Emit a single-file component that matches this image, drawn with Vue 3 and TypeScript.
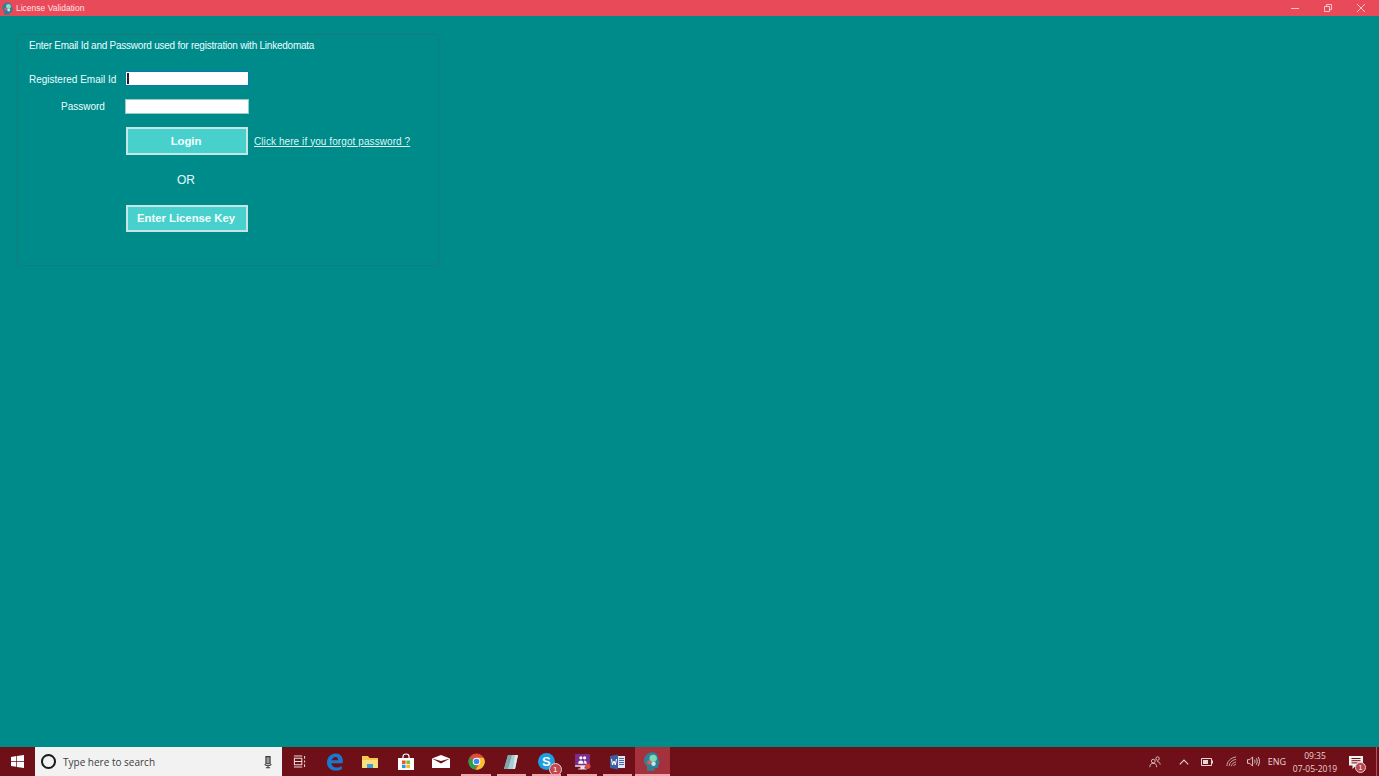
<script setup lang="ts">
const runningApps = ['chrome', 'notes', 'skype', 'teams', 'word', 'app'];
</script>

<template>
  <div class="window">
    <header class="titlebar">
      <div class="title-left">
        <svg class="app-icon small" viewBox="0 0 16 16">
          <path d="M8 1C4.200 1 1.600 3.800 1.600 7.200c0 2 .9 3.400 2.200 4.500V15h5.600v-1.800h1.500c.9 0 1.500-.7 1.500-1.500V9.800l1.400-.5-1.200-2.600C12.400 3.300 10.500 1 8 1z" fill="#2f7f96" />
          <circle cx="8.500" cy="5.600" r="2.800" fill="#8fdcc4" />
          <circle cx="5.500" cy="8.600" r="1.600" fill="#e25b5b" />
          <circle cx="8.800" cy="9.800" r="1.700" fill="#c5e6f2" />
        </svg>
        <span class="title-text">License Validation</span>
      </div>
      <div class="win-controls">
        <svg viewBox="0 0 10 10" class="win-btn"><path d="M1 5.500h8" /></svg>
        <svg viewBox="0 0 10 10" class="win-btn"><path d="M1.500 3.500h5v5h-5zM3.500 3.500v-2h5v5h-2" /></svg>
        <svg viewBox="0 0 10 10" class="win-btn"><path d="M1 1l8 8M9 1l-8 8" /></svg>
      </div>
    </header>

    <main class="content">
      <section class="panel">
        <p class="intro">Enter Email Id and Password used for registration with Linkedomata</p>
        <div class="form-grid">
          <label class="field-label">Registered Email Id</label>
          <div class="input focused"><span class="caret"></span></div>

          <label class="field-label password-label">Password</label>
          <div class="input"></div>

          <span></span>
          <div class="login-row">
            <button class="action login">Login</button>
            <a class="forgot">Click here if you forgot password ?</a>
          </div>

          <span></span>
          <div class="or">OR</div>

          <span></span>
          <button class="action license">Enter License Key</button>
        </div>
      </section>
    </main>

    <footer class="taskbar">
      <div class="start">
        <svg viewBox="0 0 13 13" width="13" height="13">
          <path d="M0 1.900l5.300-.8v5H0zM6 1l7-1v6.100H6zM0 6.800h5.300v5L0 11.100zM6 6.800h7V13l-7-1z" fill="#fff" />
        </svg>
      </div>
      <div class="search">
        <span class="cortana"></span>
        <span class="search-text">Type here to search</span>
        <svg class="mic" viewBox="0 0 12 16" width="10" height="14">
          <path d="M3.500 1.500h5v8.500h-5z" fill="#9a9a9a" stroke="#3a3a3a" stroke-width="1.300" />
          <path d="M2 10.500c.5 1.500 2 2 4 2s3.500-.5 4-2M6 12.500V15M3.500 15h5" fill="none" stroke="#3a3a3a" stroke-width="1.300" />
        </svg>
      </div>

      <div class="task-btn">
        <svg viewBox="0 0 14 14" width="13" height="13" fill="none" stroke="#f0dcdc" stroke-width="1.100">
          <path d="M1 1h9M1 13h9M1.500 3.500h8v7h-8zM1.500 7h8M12.500 1v3M12.500 6v2M12.500 10v3" />
        </svg>
      </div>
      <div class="task-btn">
        <svg viewBox="0 0 18 18" width="18" height="18">
          <path d="M16.500 10.200H5.400c.2 2.600 2.100 4.300 4.900 4.300 2 0 4-.6 5.500-1.600v3.300c-1.500.9-3.700 1.400-6 1.400C4.300 17.600 1 14.300 1 9.500 1 4.100 5 .4 9.900.4c4.300 0 6.900 3 6.900 7.600 0 .8-.1 1.500-.3 2.200zM12.200 7.300c0-2-1.100-3.400-2.700-3.400-1.800 0-3.300 1.300-3.900 3.400z" fill="#1a78cf" />
        </svg>
      </div>
      <div class="task-btn">
        <svg viewBox="0 0 16 14" width="16" height="14">
          <path d="M0 1h6l1.500 2H16v10H0z" fill="#f3c94f" />
          <path d="M0 5h16v8H0z" fill="#fbdf80" />
          <path d="M5 9h6v4H5z" fill="#3f9fd8" />
        </svg>
      </div>
      <div class="task-btn">
        <svg viewBox="0 0 16 17" width="16" height="17">
          <path d="M5 5V3.500C5 2 6.300 1 8 1s3 1 3 2.500V5" fill="none" stroke="#fff" stroke-width="1.200" />
          <path d="M0 5h16v12H0z" fill="#fff" />
          <path d="M4 7.500h3.600v3.400H4z" fill="#e8532b" />
          <path d="M8.400 7.500H12v3.400H8.400z" fill="#7db93a" />
          <path d="M4 11.700h3.600v3.400H4z" fill="#2a9bd8" />
          <path d="M8.400 11.700H12v3.400H8.400z" fill="#f5b920" />
        </svg>
      </div>
      <div class="task-btn">
        <svg viewBox="0 0 18 13" width="18" height="13">
          <path d="M0 3.500L9 0l9 3.500V13H0z" fill="#fff" />
          <path d="M0 3.500l9 5 9-5-9 2.500z" fill="#6f0f17" />
        </svg>
      </div>

      <div v-for="name in runningApps" :key="name" class="task-btn running" :class="{ active: name === 'app' }">
        <svg v-if="name === 'chrome'" viewBox="0 0 18 18" width="17" height="17">
          <circle cx="9" cy="9" r="8.500" fill="#dd4b39" />
          <path d="M9 9L1.600 4.800A8.500 8.500 0 0 0 8 17.500z" fill="#2f9e4f" />
          <path d="M9 5h7.700A8.500 8.500 0 0 1 8 17.500L12.500 11z" fill="#f6c232" />
          <circle cx="9" cy="9" r="4" fill="#fff" />
          <circle cx="9" cy="9" r="3" fill="#4285f4" />
        </svg>
        <svg v-else-if="name === 'notes'" viewBox="0 0 16 16" width="16" height="16">
          <path d="M5 1h10l-3 14H1z" fill="#a9cdd2" />
          <path d="M5 1h4L5 15H1z" fill="#7ea6b0" />
          <path d="M12 1h3l-3 14h-2z" fill="#d9e8ea" />
        </svg>
        <div v-else-if="name === 'skype'" class="skype">
          <span class="skype-s">S</span>
          <span class="skype-badge">1</span>
        </div>
        <svg v-else-if="name === 'teams'" viewBox="0 0 16 16" width="17" height="17">
          <path d="M1 1h14v10.500H1z" fill="#7a2f8e" />
          <path d="M1 11.500h14V13H1zM6 13h4v1.500H6zM4 14.500h8v1H4z" fill="#e9e2ee" />
          <circle cx="6.500" cy="4.500" r="1.500" fill="#fff" />
          <circle cx="10" cy="4.500" r="1.500" fill="#fff" />
          <path d="M4 10c0-2 1-3 2.500-3S9 8 9 10zM9.500 7c1.500 0 2.500 1 2.500 3H9.700z" fill="#fff" />
          <circle cx="13" cy="12.500" r="2.500" fill="#e0483d" />
        </svg>
        <svg v-else-if="name === 'word'" viewBox="0 0 17 16" width="17" height="16">
          <path d="M1 2l8-1.500v15L1 14z" fill="#3d5f9f" />
          <path d="M9 2h7v12H9z" fill="#dfe6f2" />
          <path d="M10 4.500h5M10 6.500h5M10 8.500h5M10 10.500h5" stroke="#4a6aa8" />
          <path d="M2.500 5l1 6 1.500-4 1.300 4 1.200-6" fill="none" stroke="#fff" />
        </svg>
        <svg v-else class="app-icon" viewBox="0 0 16 16">
          <path d="M8 1C4.200 1 1.600 3.800 1.600 7.200c0 2 .9 3.400 2.200 4.500V15h5.600v-1.800h1.500c.9 0 1.500-.7 1.500-1.500V9.800l1.400-.5-1.200-2.600C12.400 3.300 10.500 1 8 1z" fill="#2f8296" />
          <circle cx="8.500" cy="5.600" r="2.800" fill="#7fd8b8" />
          <circle cx="5.500" cy="8.600" r="1.600" fill="#e25b5b" />
          <circle cx="8.800" cy="9.800" r="1.700" fill="#c5e6f2" />
        </svg>
      </div>

      <div class="tray">
        <svg class="tray-people" viewBox="0 0 14 14" width="12" height="12" fill="none" stroke="#e8d5d5">
          <circle cx="5" cy="6" r="2.200" /><circle cx="10" cy="3" r="2" />
          <path d="M1 13c0-3 1.500-4.500 4-4.500S9 10 9 13M9.500 6.500c2 0 3.500 1.500 3.500 3.500" />
        </svg>
        <svg class="tray-chevron" viewBox="0 0 10 6" width="10" height="6" fill="none" stroke="#e8d5d5" stroke-width="1.100">
          <path d="M.8 5.300L5 1l4.200 4.300" />
        </svg>
        <svg class="tray-battery" viewBox="0 0 12 8" width="12" height="8">
          <path d="M.5.500h10v7H.5z" fill="none" stroke="#e8d5d5" /><path d="M2 2h5v4H2z" fill="#e8d5d5" /><path d="M11 2.500h1v3h-1z" fill="#e8d5d5" />
        </svg>
        <svg class="tray-wifi" viewBox="0 0 12 12" width="11" height="11" fill="none" stroke="#cfb6b6">
          <path d="M1 11C1 6 5 2 11 1M3.500 11c0-3.500 3-6.500 7.500-7.300M6 11c0-2 2-4 5-4.500" /><path d="M8.500 11c0-1 1-2 2.500-2" />
        </svg>
        <svg class="tray-volume" viewBox="0 0 14 12" width="13" height="11" fill="none" stroke="#e8d5d5">
          <path d="M.5 4h2.500L6 1v10L3 8H.5zM8 4c.8 1.200.8 2.800 0 4M10 2.500c1.400 2 1.400 5 0 7M12 1c2 3 2 7 0 10" />
        </svg>
        <span class="tray-lang">ENG</span>
        <div class="clock">
          <span>09:35</span>
          <span>07-05-2019</span>
        </div>
        <div class="notify">
          <svg viewBox="0 0 14 13" width="14" height="13">
            <path d="M0 0h14v9.500H7L3.500 13V9.500H0z" fill="#f4f0f0" />
            <path d="M2.500 2.500h9M2.500 4.700h9M2.500 6.900h6" stroke="#6f0f17" />
          </svg>
          <span class="notify-badge">1</span>
        </div>
        <span class="show-desktop"></span>
      </div>
    </footer>
  </div>
</template>

<style>
html, body { margin: 0; overflow: hidden; }
</style>

<style scoped>
.window { width: 1379px; height: 776px; display: flex; flex-direction: column; background: #008b8b; font-family: "Liberation Sans", Arial, sans-serif; color: #fff; overflow: hidden; }

.titlebar { height: 16px; flex: none; background: #e94a5a; display: flex; align-items: center; justify-content: space-between; }
.title-left { display: flex; align-items: center; gap: 1px; padding-left: 1px; }
.app-icon { width: 21px; height: 21px; }
.app-icon.small { width: 14px; height: 15px; }
.title-text { font-size: 8.500px; color: #ffe3e6; line-height: 16px; }
.win-controls { display: flex; gap: 23px; padding-right: 13px; }
.win-btn { width: 10px; height: 10px; fill: none; stroke: #ffc4ca; stroke-width: 1; }

.content { flex: 1; padding: 18px 0 0 17px; }
.panel { width: 422px; height: 232px; box-sizing: border-box; border: 1px solid #187a7b; padding: 5px 0 0 11px; }
.intro { margin: 0; font-size: 10px; line-height: 12px; color: #eaffff; letter-spacing: -0.235px; }

.form-grid { display: grid; grid-template-columns: 97px 122px; row-gap: 15px; align-items: center; margin-top: 20px; }
.field-label { font-size: 10px; line-height: 13px; color: #eaffff; white-space: nowrap; }
.field-label:first-child { position: relative; top: 1px; }
.password-label { padding-left: 32px; }

.input { height: 13px; background: #fff; box-shadow: 0 0 0 1px #9ccaca; display: flex; align-items: center; }
.input.focused { box-shadow: 0 0 0 1px #0a78b0; }
.caret { width: 2px; height: 11px; margin-left: 1px; background: #222; }

.login-row { display: flex; align-items: center; gap: 6px; width: 300px; margin-top: -1px; }
.action { width: 122px; box-sizing: border-box; border: 2px solid #c6e6e6; background: #48d1cc; color: #f3ffff; font: bold 11.300px "Liberation Sans", Arial, sans-serif; padding: 0 2px 1px 0; }
.login { height: 28px; flex: none; }
.license { height: 27px; }
.forgot { font-size: 10px; letter-spacing: 0.08px; color: #dcf6f6; text-decoration: underline; white-space: nowrap; }
.or { text-align: center; font-size: 12px; line-height: 14px; color: #e6fbfb; margin: 3px 2px 3px 0; }

.taskbar { height: 29px; flex: none; background: #6f0f17; display: flex; align-items: stretch; }
.start { width: 35px; display: flex; align-items: center; justify-content: center; }
.search { width: 247px; background: #f2f2f2; display: flex; align-items: center; padding: 0 9px 0 6px; box-sizing: border-box; }
.cortana { width: 11px; height: 11px; border: 2px solid #1a1a1a; border-radius: 50%; }
.search-text { margin-left: 7px; font-family: "Open Sans", sans-serif; font-size: 10px; color: #3c3c3c; flex: 1; }
.mic { flex: none; }

.task-btn { width: 35.300px; flex: none; display: flex; align-items: center; justify-content: center; position: relative; }
.task-btn.running::after { content: ""; position: absolute; left: 3px; right: 3px; bottom: 0; height: 2px; background: #f0a8ae; }
.task-btn.active { background: #a5313d; }
.task-btn.active::after { left: 0; right: 0; }
.skype { position: relative; width: 18px; height: 18px; }
.skype-s { display: block; width: 17px; height: 17px; border-radius: 50%; background: #1c9ee0; color: #fff; font: bold 13px/17px "Liberation Sans", sans-serif; text-align: center; }
.skype-badge { position: absolute; right: -6px; bottom: -5px; width: 11px; height: 11px; border-radius: 50%; background: #c2474f; border: 1px solid #e8d0d0; color: #fff; font-size: 8px; line-height: 11px; text-align: center; box-sizing: content-box; }

.tray { margin-left: auto; display: flex; align-items: center; position: relative; color: #e8d5d5; }
.tray-people { margin-right: 18px; }
.tray-chevron { margin-right: 12px; }
.tray-battery { margin-right: 13px; }
.tray-wifi { margin-right: 10px; }
.tray-volume { margin-right: 8px; }
.tray-lang { font-family: "Open Sans", sans-serif; font-size: 9px; margin-right: 7px; }
.clock { display: flex; flex-direction: column; align-items: center; font-family: "Open Sans", sans-serif; font-size: 8.500px; line-height: 13px; width: 44px; margin-right: 12px; white-space: nowrap; }
.notify { position: relative; width: 14px; height: 13px; margin-right: 16px; }
.notify-badge { position: absolute; right: -3px; bottom: -5px; width: 9px; height: 9px; border-radius: 50%; background: #b9434c; border: 1px solid #e8d0d0; font-size: 7px; line-height: 9px; text-align: center; color: #fff; }
.show-desktop { position: absolute; right: 2px; top: 0; bottom: 0; width: 1px; background: #a75a60; }
</style>
